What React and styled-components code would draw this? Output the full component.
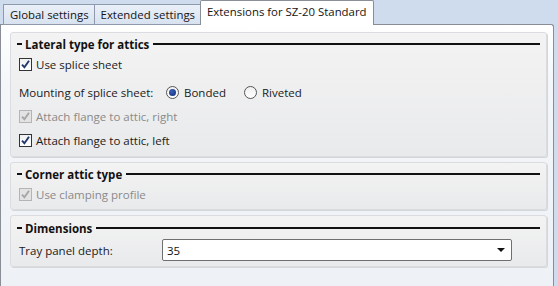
import React from "react";
import styled, { createGlobalStyle } from "styled-components";

const Global = createGlobalStyle`
  html, body { margin: 0; padding: 0; }
  body { background: #cfdcee; }
  * { box-sizing: border-box; }
`;

const Window = styled.div`
  width: 558px;
  height: 286px;
  background: #cfdcee;
  font-family: "Open Sans", "Noto Sans", sans-serif;
  font-size: 11.5px;
  color: #1a1a1a;
  display: flex;
  flex-direction: column;
  overflow: hidden;
`;

const TabStrip = styled.div`
  display: flex;
  align-items: flex-end;
  height: 25px;
  padding-left: 3px;
  position: relative;
  z-index: 1;
`;

const Tab = styled.div`
  height: ${(p) => (p.$active ? "25px" : "21px")};
  padding: ${(p) => (p.$active ? "2px 6px 0 6px" : "1px 5px 0 6px")};
  margin-left: ${(p) => (p.$first ? "0" : "-1px")};
  border: 1px solid ${(p) => (p.$active ? "#8a8e96" : "#8e9aac")};
  border-bottom: ${(p) => (p.$active ? "none" : "1px solid #8e9aac")};
  border-radius: ${(p) => (p.$active ? "2px 2px 0 0" : "0")};
  background: ${(p) =>
    p.$active ? "#ffffff" : "linear-gradient(#eaf0f8, #d8e2f0)"};
  color: #141414;
  white-space: nowrap;
  line-height: 17px;
  font-size: 11.4px;
`;

const Panel = styled.div`
  flex: 1;
  width: 554px;
  margin-top: -1px;
  border: 1px solid #898d96;
  border-bottom: none;
  border-radius: 0 3px 0 0;
  background: linear-gradient(#ffffff 0px, #f4f6f9 60px, #eef1f6 100%);
  padding: 7px 6px 0 9px;
  display: flex;
  flex-direction: column;
  gap: 5px;
`;

const Group = styled.div`
  border: 1px solid #dadcdf;
  border-radius: 3px;
  box-shadow: 1px 1px 0 #d4d6d9;
  background: linear-gradient(#f3f3f3, #e9eaec);
  padding: ${(p) => p.$pad || "2px 6px 4px 6px"};
  display: flex;
  flex-direction: column;
`;

const Title = styled.div`
  display: flex;
  align-items: center;
  height: 18px;
  font-weight: 700;
  font-size: 11.5px;
  color: #111;
  &::before {
    content: "";
    width: 5px;
    height: 1.5px;
    background: #111;
    margin-right: 3px;
  }
  &::after {
    content: "";
    flex: 1;
    height: 1.5px;
    background: #111;
    margin-left: 4px;
  }
`;

const Row = styled.div`
  display: flex;
  align-items: center;
  height: ${(p) => p.$h || 24}px;
  margin-top: ${(p) => p.$mt || 0}px;
  padding-left: 2px;
  color: ${(p) => (p.$disabled ? "#8a8a8a" : "#1a1a1a")};
`;

const Box = styled.span`
  width: 13px;
  height: 13px;
  border: 1px solid ${(p) => (p.$disabled ? "#b4b4b4" : "#333")};
  background: ${(p) =>
    p.$disabled ? "#e3e3e3" : "linear-gradient(#f0f0f0, #ffffff)"};
  display: inline-flex;
  align-items: center;
  justify-content: center;
  margin-right: 4px;
  flex: none;
`;

const Label = styled.span`
  width: ${(p) => (p.$w ? p.$w + "px" : "auto")};
  flex: none;
`;

const RadioCircle = styled.span`
  width: 13px;
  height: 13px;
  border-radius: 50%;
  border: 1px solid #555;
  background: linear-gradient(#f0f0f0, #ffffff);
  display: inline-flex;
  align-items: center;
  justify-content: center;
  margin-right: 5px;
  flex: none;
  &::after {
    content: "";
    width: 7px;
    height: 7px;
    border-radius: 50%;
    background: ${(p) => (p.$on ? "radial-gradient(circle at 40% 35%, #3b5fb8, #0f2a78)" : "transparent")};
  }
`;

const RadioItem = styled.span`
  display: inline-flex;
  align-items: center;
  margin-right: ${(p) => p.$mr || 0}px;
`;

const Select = styled.div`
  width: 350px;
  height: 22px;
  border: 1px solid #6f6f6f;
  border-radius: 2px;
  background: #fff;
  display: flex;
  align-items: center;
  justify-content: space-between;
  padding: 0 6px 0 4px;
  color: #111;
`;

const Arrow = styled.span`
  width: 0;
  height: 0;
  border-left: 4px solid transparent;
  border-right: 4px solid transparent;
  border-top: 4px solid #111;
`;

function Check({ disabled }) {
  return (
    <Box $disabled={disabled}>
      <svg width="11" height="11" viewBox="0 0 11 11">
        <path
          d="M2 5.6 L4.4 8.2 L9 1.8"
          fill="none"
          stroke={disabled ? "#a6a6a6" : "#21386b"}
          strokeWidth="1.9"
        />
      </svg>
    </Box>
  );
}

function CheckRow({ label, disabled, h, mt }) {
  return (
    <Row $disabled={disabled} $h={h} $mt={mt}>
      <Check disabled={disabled} />
      <Label>{label}</Label>
    </Row>
  );
}

export default function App() {
  return (
    <>
      <Global />
      <Window>
        <TabStrip>
          <Tab $first>Global settings</Tab>
          <Tab>Extended settings</Tab>
          <Tab $active>Extensions for SZ-20 Standard</Tab>
        </TabStrip>
        <Panel>
          <Group>
            <Title>Lateral type for attics</Title>
            <CheckRow label="Use splice sheet" h={22} />
            <Row $mt={5}>
              <Label $w={147}>Mounting of splice sheet:</Label>
              <RadioItem $mr={18}>
                <RadioCircle $on />
                Bonded
              </RadioItem>
              <RadioItem>
                <RadioCircle />
                Riveted
              </RadioItem>
            </Row>
            <CheckRow label="Attach flange to attic, right" disabled />
            <CheckRow label="Attach flange to attic, left" />
          </Group>
          <Group>
            <Title>Corner attic type</Title>
            <CheckRow label="Use clamping profile" disabled h={22} />
          </Group>
          <Group $pad="3px 6px 4px 6px">
            <Title>Dimensions</Title>
            <Row $mt={1}>
              <Label $w={143}>Tray panel depth:</Label>
              <Select>
                <span>35</span>
                <Arrow />
              </Select>
            </Row>
          </Group>
        </Panel>
      </Window>
    </>
  );
}
